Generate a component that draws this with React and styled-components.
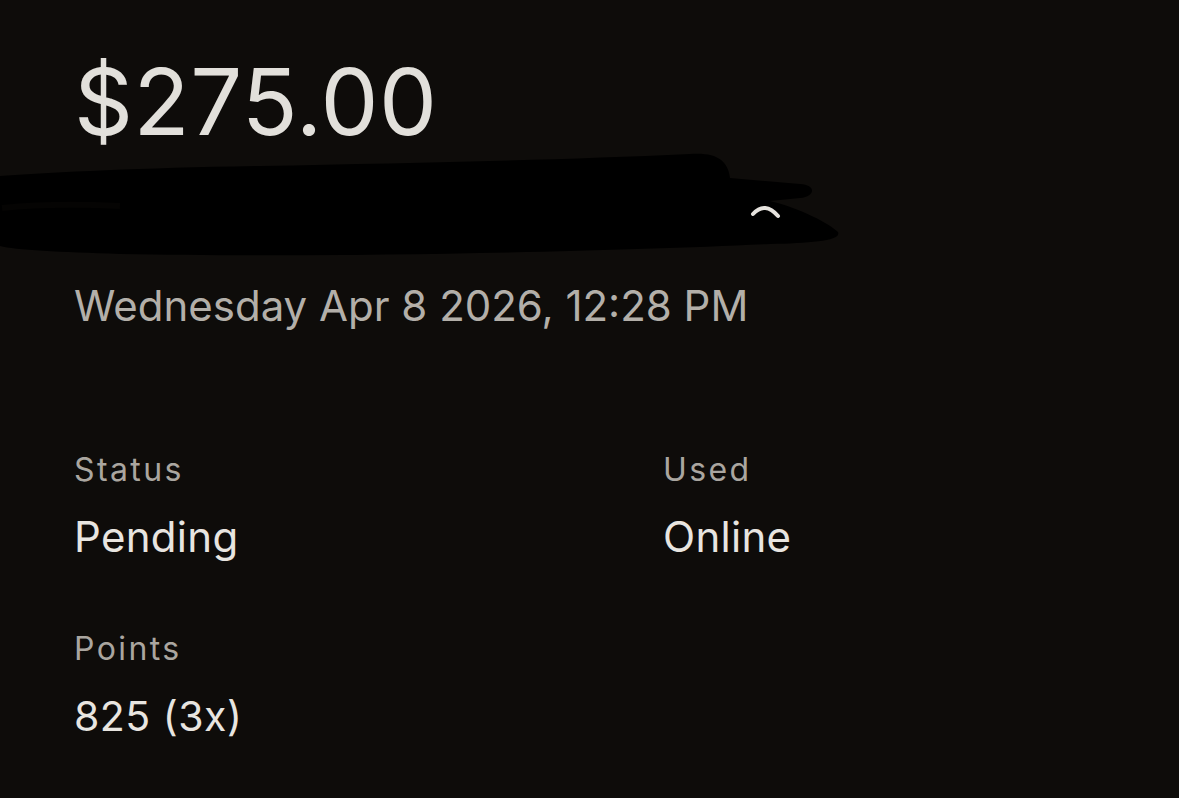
import styled, { createGlobalStyle } from "styled-components";

const GlobalStyle = createGlobalStyle`
  html, body {
    margin: 0;
    padding: 0;
    background: #0e0c0a;
  }
  body {
    font-family: Inter, "Liberation Sans", sans-serif;
    -webkit-font-smoothing: antialiased;
  }
`;

const Page = styled.div`
  width: 1179px;
  height: 798px;
  background: #0e0c0a;
  overflow: hidden;
  padding-top: 52px;
  box-sizing: border-box;
`;

const Section = styled.div`
  padding-left: 74px;
`;

const Amount = styled.h1`
  margin: 0;
  font-size: 92px;
  line-height: 100px;
  font-weight: 400;
  letter-spacing: 0.5px;
  color: #e2e0db;
`;

const Redaction = styled.svg`
  display: block;
  width: 850px;
  height: 120px;
  margin-top: -6px;
`;

const DateLine = styled.p`
  margin: 14px 0 0;
  font-size: 42px;
  line-height: 52px;
  font-weight: 400;
  letter-spacing: 0;
  color: #b3afa9;
`;

const Details = styled.div`
  display: grid;
  grid-template-columns: 589px 1fr;
  row-gap: 70px;
  margin-top: 120px;
`;

const Field = styled.div`
  display: flex;
  flex-direction: column;
  gap: 25px;
`;

const Label = styled.span`
  font-size: 32px;
  line-height: 36px;
  letter-spacing: 2.4px;
  color: #aaa6a0;
`;

const Value = styled.span`
  font-size: ${(p) => (p.$small ? "41px" : "42px")};
  line-height: 48px;
  letter-spacing: ${(p) => (p.$small ? "0.5px" : "0.3px")};
  color: #e8e5e0;
`;

const fields = [
  { label: "Status", value: "Pending" },
  { label: "Used", value: "Online" },
  { label: "Points", value: "825 (3x)", small: true },
];

const App = () => {
  return (
    <Page>
      <GlobalStyle />
      <Section>
        <Amount>$275.00</Amount>
      </Section>
      <Redaction viewBox="0 0 850 120">
        <path
          d="M0,30 C60,26 140,22 260,20 C420,17 560,14 690,8 C716,6 728,14 730,32 L800,38 C816,39 816,50 800,52 L770,55 C800,62 830,78 838,86 C842,95 810,97 770,98 C600,106 320,112 120,108 C60,106 15,104 0,100 Z"
          fill="#000"
        />
        <path d="M2,62 C40,58 80,58 120,60" stroke="#050403" strokeWidth="6" fill="none" />
        <path d="M753,68 Q765,55 778,70" stroke="#e6e3de" strokeWidth="4" fill="none" strokeLinecap="round" />
      </Redaction>
      <Section>
        <DateLine>Wednesday Apr 8 2026, 12:28 PM</DateLine>
        <Details>
          {fields.map((f) => (
            <Field key={f.label}>
              <Label>{f.label}</Label>
              <Value $small={f.small}>{f.value}</Value>
            </Field>
          ))}
        </Details>
      </Section>
    </Page>
  );
};

export default App;
